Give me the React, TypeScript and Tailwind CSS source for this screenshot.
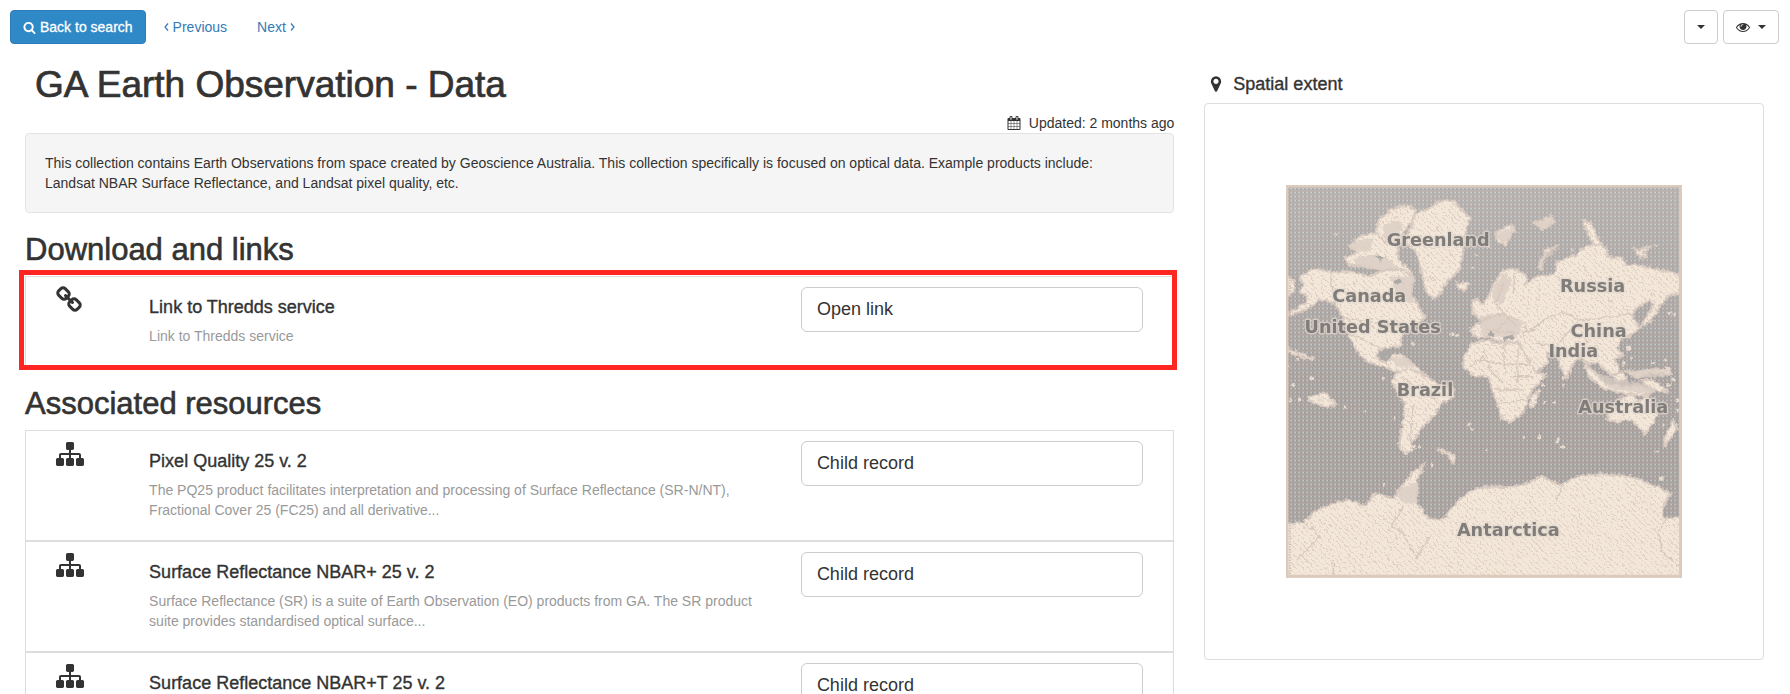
import React from 'react';

const ICONS = {
  search:
    'M1216 832q0-185-131.5-316.5t-316.5-131.5-316.5 131.5-131.5 316.5 131.5 316.5 316.5 131.5 316.5-131.5 131.5-316.5zm512 832q0 52-38 90t-90 38q-54 0-90-38l-343-342q-179 124-399 124-143 0-273.5-55.5t-225-150-150-225-55.5-273.5 55.5-273.5 150-225 225-150 273.5-55.5 273.5 55.5 225 150 150 225 55.5 273.5q0 220-124 399l343 343q37 37 37 90z',
  eye:
    'M1664 960q-152-236-381-353 61 104 61 225 0 185-131.5 316.5t-316.5 131.5-316.5-131.5-131.5-316.5q0-121 61-225-229 117-381 353 133 205 333.5 326.5t434.5 121.5 434.5-121.5 333.5-326.5zm-720-384q0-20-14-34t-34-14q-125 0-214.5 89.5t-89.5 214.5q0 20 14 34t34 14 34-14 14-34q0-86 61-147t147-61q20 0 34-14t14-34zm848 384q0 34-20 69-140 230-376.5 368.5t-499.5 138.5-499.5-139-376.5-368q-20-35-20-69t20-69q140-229 376.5-368t499.5-139 499.5 139 376.5 368q20 35 20 69z',
  marker:
    'M1152 640q0-106-75-181t-181-75-181 75-75 181 75 181 181 75 181-75 75-181zm256 0q0 109-33 179l-364 774q-16 33-47.5 52t-67.5 19-67.5-19-46.5-52l-365-774q-33-70-33-179 0-212 150-362t362-150 362 150 150 362z',
  calendar:
    'M192 1664h288v-288h-288v288zm352 0h320v-288h-320v288zm-352-352h288v-320h-288v320zm352 0h320v-320h-320v320zm-352-384h288v-288h-288v288zm736 736h320v-288h-320v288zm-384-736h320v-288h-320v288zm768 736h288v-288h-288v288zm-384-352h320v-320h-320v320zm-352-864v-288q0-13-9.5-22.5t-22.5-9.5h-64q-13 0-22.5 9.5t-9.5 22.5v288q0 13 9.5 22.5t22.5 9.5h64q13 0 22.5-9.5t9.5-22.5zm736 864h288v-320h-288v320zm-384-384h320v-288h-320v288zm384 0h288v-288h-288v288zm32-480v-288q0-13-9.5-22.5t-22.5-9.5h-64q-13 0-22.5 9.5t-9.5 22.5v288q0 13 9.5 22.5t22.5 9.5h64q13 0 22.5-9.5t9.5-22.5zm384-64v1280q0 52-38 90t-90 38h-1408q-52 0-90-38t-38-90v-1280q0-52 38-90t90-38h128v-96q0-66 47-113t113-47h64q66 0 113 47t47 113v96h384v-96q0-66 47-113t113-47h64q66 0 113 47t47 113v96h128q52 0 90 38t38 90z',
  link:
    'M1456 1216q0-40-28-68l-208-208q-28-28-68-28-42 0-72 32 3 3 19 18.5t21.5 21.5 15 19 13 25.5 3.5 27.5q0 40-28 68t-68 28q-15 0-27.5-3.5t-25.5-13-19-15-21.5-21.5-18.5-19q-33 31-33 73 0 40 28 68l206 207q27 27 68 27 40 0 68-26l147-146q28-28 28-67zm-703-705q0-40-28-68l-206-207q-28-28-68-28-39 0-68 27l-147 146q-28 28-28 67 0 40 28 68l208 208q27 27 68 27 42 0 72-31-3-3-19-18.5t-21.5-21.5-15-19-13-25.5-3.5-27.5q0-40 28-68t68-28q15 0 27.5 3.5t25.5 13 19 15 21.5 21.5 18.5 19q33-31 33-73zm895 705q0 120-85 203l-147 146q-83 83-203 83-121 0-204-85l-206-207q-83-83-83-203 0-123 88-209l-88-88q-86 88-208 88-120 0-204-84l-208-208q-84-84-84-204t85-203l147-146q83-83 203-83 121 0 204 85l206 207q83 83 83 203 0 123-88 209l88 88q86-88 208-88 120 0 204 84l208 208q84 84 84 204z',
  sitemap:
    'M1792 1248v320q0 40-28 68t-68 28h-320q-40 0-68-28t-28-68v-320q0-40 28-68t68-28h96v-192h-512v192h96q40 0 68 28t28 68v320q0 40-28 68t-68 28h-320q-40 0-68-28t-28-68v-320q0-40 28-68t68-28h96v-192h-512v192h96q40 0 68 28t28 68v320q0 40-28 68t-68 28h-320q-40 0-68-28t-28-68v-320q0-40 28-68t68-28h96v-192q0-52 38-90t90-38h512v-192h-96q-40 0-68-28t-28-68v-320q0-40 28-68t68-28h320q40 0 68 28t28 68v320q0 40-28 68t-68 28h-96v192h512q52 0 90 38t38 90v192h96q40 0 68 28t28 68z',
};

type IconName = keyof typeof ICONS;

function Icon({ name, className }: { name: IconName; className: string }) {
  return (
    <svg viewBox="0 0 1792 1792" fill="currentColor" aria-hidden="true" className={className}>
      <path d={ICONS[name]} />
    </svg>
  );
}

function Chevron({ points }: { points: string }) {
  return (
    <svg viewBox="0 0 5 8" className="h-2 w-[5px]" fill="none" stroke="currentColor" strokeWidth="1.2" aria-hidden="true">
      <polyline points={points} />
    </svg>
  );
}

function Caret() {
  return (
    <svg viewBox="0 0 8 4" className="h-1 w-2" fill="currentColor" aria-hidden="true">
      <path d="M0 0h8L4 4z" />
    </svg>
  );
}

interface Resource {
  icon: IconName;
  title: string;
  text: string;
  action: string;
}

const RESOURCES: Resource[] = [
  {
    icon: 'sitemap',
    title: 'Pixel Quality 25 v. 2',
    text: 'The PQ25 product facilitates interpretation and processing of Surface Reflectance (SR-N/NT), Fractional Cover 25 (FC25) and all derivative...',
    action: 'Child record',
  },
  {
    icon: 'sitemap',
    title: 'Surface Reflectance NBAR+ 25 v. 2',
    text: 'Surface Reflectance (SR) is a suite of Earth Observation (EO) products from GA. The SR product suite provides standardised optical surface...',
    action: 'Child record',
  },
  {
    icon: 'sitemap',
    title: 'Surface Reflectance NBAR+T 25 v. 2',
    text: 'Surface Reflectance (SR) is a suite of Earth Observation (EO) products from GA. The SR product suite provides standardised optical surface...',
    action: 'Child record',
  },
];

function ResourceRow({ icon, title, text, action }: Resource) {
  return (
    <div className="flex border border-[#ddd] px-[15px] pt-[9px] pb-5">
      <div className="w-1/12 px-[15px]">
        <Icon name={icon} className="h-7 w-7" />
      </div>
      <div className="w-7/12 px-[15px] pt-[11px]">
        <h3 className="text-[18px] leading-5 font-medium [-webkit-text-stroke:0.02em]">{title}</h3>
        <p className="mt-[9px] text-sm leading-5 text-[#999]">{text}</p>
      </div>
      <div className="w-4/12 px-[15px] pt-[1px]">
        <button
          type="button"
          className="block w-full rounded-md border border-[#ccc] bg-white px-[15px] py-[10px] text-left text-[18px] leading-[23px]"
        >
          {action}
        </button>
      </div>
    </div>
  );
}

const LABELS: { x: number; y: number; name: string }[] = [
  { x: 505, y: 228, name: 'Greenland' },
  { x: 298, y: 395, name: 'Canada' },
  { x: 308, y: 488, name: 'United States' },
  { x: 968, y: 366, name: 'Russia' },
  { x: 986, y: 500, name: 'China' },
  { x: 910, y: 560, name: 'India' },
  { x: 465, y: 677, name: 'Brazil' },
  { x: 1060, y: 728, name: 'Australia' },
  { x: 715, y: 1098, name: 'Antarctica' },
];

const LAND = [
  // Greenland and the Arctic islands
  'M430 135L480 115L510 92L555 92L575 120L600 145L588 180L580 235L568 300L530 335L505 380L488 388L468 365L455 310L438 245L400 215L425 170Z',
  'M325 150L365 118L405 105L438 118L425 155L400 185L395 215L340 225L320 190Z',
  'M238 225L275 196L320 190L345 215L390 225L380 250L395 280L420 300L435 330L380 320L330 300L290 290L235 285L225 262L260 250Z',
  // North and Central America
  'M90 320L130 295L180 305L240 305L300 318L350 300L400 300L430 325L425 370L445 410L468 442L440 460L412 475L395 492L392 528L360 530L325 540L322 565L350 580L372 552L400 560L440 590L480 630L465 650L380 605L340 590L290 575L262 545L235 495L222 450L195 400L150 388L120 412L80 430L50 440L50 432L105 400L112 380L90 365L100 345Z',
  // South America
  'M375 615L410 595L450 610L480 625L505 645L550 655L552 680L515 700L500 725L475 755L450 780L435 805L420 820L430 835L405 855L388 830L392 790L402 740L405 700L375 655L365 635Z',
  // Europe and Asia
  'M600 480L615 465L640 455L610 430L605 395L620 385L640 405L655 380L675 335L700 300L730 295L770 315L765 345L800 318L850 315L862 275L920 255L945 230L985 222L1010 235L1015 262L1055 262L1070 285L1105 285L1160 298L1230 312L1230 372L1195 378L1180 395L1145 450L1110 475L1150 405L1140 390L1105 410L1085 435L1110 475L1085 495L1058 505L1040 535L1062 555L1035 570L1050 610L1020 615L985 580L955 580L925 560L905 590L890 630L872 590L862 550L830 545L835 575L795 610L770 575L750 520L690 515L655 500L620 505Z',
  // Africa
  'M582 560L600 525L645 510L690 520L745 520L770 560L800 610L832 612L805 640L782 665L770 700L755 735L718 757L695 745L682 700L665 655L655 620L610 618L580 592Z',
  'M778 685L805 660L800 700L785 715Z',
  // South-east Asia and Oceania
  'M940 575L975 605L1010 640L1060 650L1110 645L1150 665L1130 678L1060 670L1000 655L960 625Z',
  'M1065 600L1100 605L1140 598L1200 600L1205 615L1140 610L1100 625Z',
  'M1030 615L1060 605L1070 630L1040 635Z',
  'M1110 630L1150 630L1195 665L1150 662Z',
  'M1010 750L1022 712L1060 680L1095 672L1105 700L1130 672L1165 735L1125 795L1085 750L1045 755Z',
  'M1210 750L1222 775L1185 830L1182 808Z',
  // Small islands and archipelagos
  'M50 315L72 335L72 365L50 385ZM560 340L595 338L592 358L565 358Z',
  'M675 190L725 162L735 185L705 225L680 215ZM790 160L845 138L855 155L820 180Z',
  'M935 150L960 155L995 225L970 222ZM865 225L825 255L815 300L805 290L825 240ZM1090 235L1105 240L1145 228L1120 248L1135 262L1110 262Z',
  'M50 535L130 565L128 572L50 545ZM115 685L165 665L200 705L175 712L130 700Z',
  'M505 835L535 845L555 860L550 880L535 855L505 842Z',
  // Antarctica
  'M40 1060L100 1058L135 1025L170 1008L230 990L285 1005L315 970L370 985L395 950L425 910L465 880L442 930L440 1000L480 1048L520 1048L560 995L610 960L650 950L720 952L775 940L815 918L870 945L930 918L1000 912L1080 918L1160 948L1202 970L1180 1010L1180 1042L1245 1045L1245 1240L40 1240Z',
];

const BORDERS = [
  'M180 310L195 400M225 445L400 470M240 490L330 535M420 660L460 640L500 700M430 700L420 820M395 620L430 650',
  'M640 540L660 600L700 640M700 525L705 610M745 530L740 640M620 570L690 580L780 585M680 660L760 660M690 700L770 690M600 590L640 560M720 620L790 620',
  'M680 480L720 440L770 460L760 500M640 450L700 430L740 470M700 340L680 400L700 430M735 310L730 370M840 440L880 425L930 450L1040 440L1080 430M780 480L840 440M800 520L860 530L900 480L960 520M650 480L740 490L800 480',
  'M400 1010L365 1065L400 1090L440 1165L480 1100M110 1060L150 1100L80 1170M190 1170V1215M860 990L880 945M1190 1045L1165 1090L1180 1150L1230 1190',
];

// Coastal shading where islands and inlets crowd together
const SHADED = [
  'M245 215L310 205L300 245L240 240ZM250 265L320 250L360 270L400 300L330 300L260 290Z',
  'M340 165L390 150L400 180L345 210ZM355 320L425 320L430 400L390 390Z',
  'M675 195L725 170L735 190L700 222ZM795 160L850 142L850 165L815 178ZM870 230L830 255L820 295L808 285Z',
  'M620 440L700 430L760 460L740 500L640 500ZM670 350L700 310L725 330L700 400L670 400Z',
  'M960 600L1040 630L1120 640L1180 665L1120 670L1020 655ZM1080 600L1200 605L1190 620L1090 625Z',
  'M360 560L420 565L440 590L380 590ZM375 960L440 940L438 1000L400 1000Z',
];

// [x, y, radius] of islets scattered over the oceans
const ISLETS = [
  [52, 590, 4], [85, 568, 4], [70, 645, 6], [62, 692, 6], [90, 690, 7], [125, 625, 5], [150, 690, 8], [180, 690, 7],
  [225, 712, 4], [285, 724, 4], [340, 944, 4], [375, 745, 4], [430, 520, 5], [545, 492, 6], [560, 496, 5], [610, 295, 4],
  [597, 762, 5], [606, 775, 4], [762, 803, 5], [808, 803, 6], [650, 842, 4], [864, 812, 6], [878, 832, 5], [820, 645, 6],
  [808, 662, 5], [825, 697, 5], [850, 697, 4], [882, 598, 5], [880, 622, 5], [880, 645, 5], [1175, 927, 6], [1160, 845, 4],
  [907, 241, 4], [1155, 226, 4], [1202, 430, 5], [1215, 434, 5], [1188, 570, 5], [1150, 580, 4], [1075, 535, 7],
  [1060, 580, 7], [1085, 565, 5], [1195, 595, 7], [1210, 630, 6], [1195, 645, 6], [1222, 690, 5], [1222, 720, 5],
  [1180, 765, 4], [430, 832, 7], [450, 830, 5], [487, 884, 6], [620, 255, 4], [655, 230, 5], [340, 625, 4], [195, 190, 4],
];

function WorldMap() {
  return (
    <svg
      viewBox="48 45 1188 1179"
      role="img"
      aria-label="Spatial extent on a world map"
      className="w-[71%]"
      fontFamily="'DejaVu Sans', sans-serif"
    >
      <defs>
        <pattern id="sea" width="12" height="12" patternUnits="userSpaceOnUse">
          <rect width="12" height="12" fill="#a39e9c" />
          <path d="M0 3h12" stroke="#b5a8a3" strokeWidth="3" />
          <path d="M1 8h5" stroke="#c3c9ca" strokeWidth="5" />
        </pattern>
        <pattern id="hatch" width="18" height="18" patternUnits="userSpaceOnUse">
          <path d="M-3 -3L21 21M-3 15L3 21M15 -3L21 3" stroke="#dfcfc2" strokeWidth="3" />
        </pattern>
        <filter id="coast" x="-5%" y="-5%" width="110%" height="110%">
          <feTurbulence type="fractalNoise" baseFrequency="0.08" numOctaves="3" seed="4" />
          <feDisplacementMap in="SourceGraphic" scale="16" xChannelSelector="R" yChannelSelector="G" />
        </filter>
        <filter id="soft">
          <feGaussianBlur stdDeviation="1.6" />
        </filter>
        <linearGradient id="north" x1="0" y1="0" x2="0" y2="1">
          <stop offset="0" stopColor="#fff" stopOpacity="0.16" />
          <stop offset="0.5" stopColor="#fff" stopOpacity="0" />
        </linearGradient>
        <clipPath id="frame">
          <rect x="48" y="45" width="1188" height="1179" />
        </clipPath>
      </defs>
      <g clipPath="url(#frame)">
        <rect x="48" y="45" width="1188" height="1179" fill="url(#sea)" />
        <rect x="48" y="45" width="1188" height="1179" fill="url(#north)" />
        <g filter="url(#coast)">
          {LAND.map((d) => (
            <path key={d} d={d} fill="#f3e7da" stroke="#d8cac0" strokeWidth="6" strokeLinejoin="round" />
          ))}
          {SHADED.map((d) => (
            <path key={d} d={d} fill="#d8cbc1" fillOpacity="0.75" />
          ))}
          {LAND.map((d) => (
            <path key={d} d={d} fill="url(#hatch)" />
          ))}
          {BORDERS.map((d) => (
            <path key={d} d={d} fill="none" stroke="#d6c7bc" strokeWidth="4" />
          ))}
          <path
            d="M325 545l35 -10l8 14l-30 18zM370 330l20 -5l6 15l-20 5zM655 485l14 0l0 12l-14 0zM700 500l30 -6l0 12l-30 4zM310 255l40 5l-20 12z"
            fill="#aba8a6"
          />
          {ISLETS.map(([cx, cy, r]) => (
            <circle key={`${cx}-${cy}`} cx={cx} cy={cy} r={r} fill="#e6d9cd" />
          ))}
        </g>
        <path d="M51 45V1224M48 48H1236M48 1219H1236M1232 45V1224" stroke="#dccbbd" strokeWidth="9" />
        <path d="M60 57V1212" stroke="#a9a5a3" strokeWidth="3" strokeDasharray="4 4" />
      </g>
      <g
        fontSize="53"
        fontWeight="700"
        textAnchor="middle"
        fill="#7f7c7a"
        stroke="#e3d8ce"
        strokeOpacity="0.7"
        strokeWidth="9"
        strokeLinejoin="round"
        paintOrder="stroke"
        filter="url(#soft)"
      >
        {LABELS.map(({ x, y, name }) => (
          <text key={name} x={x} y={y}>
            {name}
          </text>
        ))}
      </g>
    </svg>
  );
}

export default function App() {
  return (
    <div className="h-screen overflow-hidden bg-white pt-[10px] pr-[11px] pl-[10px] font-['Liberation_Sans',Arial,sans-serif] text-sm leading-5 text-[#333]">
      <header className="flex items-center justify-between">
        <nav className="flex items-center">
          <button
            type="button"
            className="flex items-center gap-1 rounded border border-[#2e7db8] bg-[#3089c7] px-3 py-[6px] font-medium text-white [-webkit-text-stroke:0.02em]"
          >
            <Icon name="search" className="h-[13px] w-[13px]" />
            Back to search
          </button>
          <a href="#previous" className="ml-[18px] flex items-center gap-1 text-[#337ab7]">
            <Chevron points="4,0.5 1,4 4,7.5" />
            Previous
          </a>
          <a href="#next" className="ml-[30px] flex items-center gap-1 text-[#337ab7]">
            Next
            <Chevron points="1,0.5 4,4 1,7.5" />
          </a>
        </nav>
        <div className="flex gap-[5px]">
          <button
            type="button"
            aria-label="Options"
            className="flex h-[34px] items-center rounded border border-[#ccc] bg-white px-3"
          >
            <Caret />
          </button>
          <button
            type="button"
            aria-label="Display mode"
            className="flex h-[34px] items-center gap-2 rounded border border-[#ccc] bg-white px-3"
          >
            <Icon name="eye" className="h-[14px] w-[14px]" />
            <Caret />
          </button>
        </div>
      </header>

      <div className="flex items-start">
        <main className="w-2/3 px-[15px]">
          <h1 className="mt-5 pl-[10px] text-[37px] leading-[41px] font-medium [-webkit-text-stroke:0.02em]">
            GA Earth Observation - Data
          </h1>
          <p className="mt-2 flex items-center justify-end gap-2">
            <Icon name="calendar" className="h-[14px] w-[14px]" />
            Updated: 2 months ago
          </p>
          <p className="rounded border border-[#e3e3e3] bg-[#f5f5f5] py-[19px] pr-8 pl-[19px]">
            This collection contains Earth Observations from space created by Geoscience Australia. This collection
            specifically is focused on optical data. Example products include: Landsat NBAR Surface Reflectance, and
            Landsat pixel quality, etc.
          </p>

          <h2 className="mt-5 mb-[10px] text-[31px] leading-[33px] font-medium [-webkit-text-stroke:0.02em]">
            Download and links
          </h2>
          <div className="relative">
            <ResourceRow
              icon="link"
              title="Link to Thredds service"
              text="Link to Thredds service"
              action="Open link"
            />
            <div className="pointer-events-none absolute -top-[6px] -right-[3px] -bottom-[3px] -left-[6px] border-[5px] border-[#ff2622]" />
          </div>

          <h2 className="mt-5 mb-[10px] text-[31px] leading-[33px] font-medium [-webkit-text-stroke:0.02em]">
            Associated resources
          </h2>
          {RESOURCES.map((r) => (
            <ResourceRow key={r.title} {...r} />
          ))}
        </main>

        <aside className="w-1/3 px-[15px]">
          <h4 className="mt-[30px] mb-[9px] flex items-center gap-2 pl-[3px] text-[18px] leading-5 font-medium [-webkit-text-stroke:0.02em]">
            <Icon name="marker" className="h-[18px] w-[18px]" />
            Spatial extent
          </h4>
          <div className="flex aspect-[560/557] items-center justify-center rounded border border-[#ddd]">
            <WorldMap />
          </div>
        </aside>
      </div>
    </div>
  );
}
